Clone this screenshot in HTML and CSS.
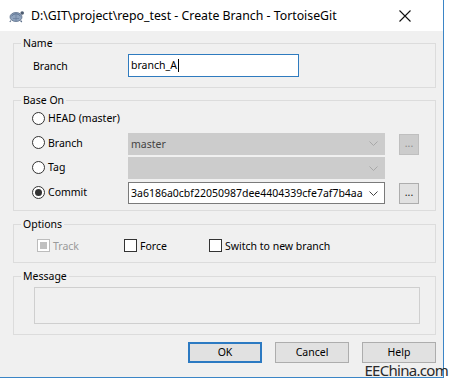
FILE: index.html
```html
<!DOCTYPE html>
<html>
<head>
<meta charset="utf-8">
<link rel="stylesheet" href="styles.css">
</head>
<body>
<div class="window">
  <div class="titlebar">
    <svg class="app-icon" width="16" height="14" viewBox="0 0 16 14">
      <ellipse cx="7" cy="8" rx="6" ry="4.5" fill="#8fa3bd"/>
      <path d="M2.5 7 Q7 2.5 11.5 7" fill="none" stroke="#5f7593" stroke-width="1"/>
      <path d="M4 9.5 L10 9.5 M7 5 L7 12" stroke="#6d829e" stroke-width="0.8"/>
      <ellipse cx="7" cy="8" rx="6" ry="4.5" fill="none" stroke="#5c6f8a" stroke-width="0.8"/>
      <circle cx="13.2" cy="4" r="1.8" fill="#4c5b70"/>
      <path d="M2 11.5 L0.8 13 M11.5 11.5 L12.8 13" stroke="#5c6f8a" stroke-width="1.2"/>
    </svg>
    <span class="title">D:\GIT\project\repo_test - Create Branch - TortoiseGit</span>
    <svg class="close" width="12" height="12" viewBox="0 0 12 12">
      <path d="M0.5 0.5 L11.5 11.5 M11.5 0.5 L0.5 11.5" stroke="#111" stroke-width="1.1"/>
    </svg>
  </div>
  <div class="content">
    <fieldset class="group group-name">
      <legend>Name</legend>
      <div class="name-row">
        <span class="field-label">Branch</span>
        <div class="textbox">branch_A<span class="caret"></span></div>
      </div>
    </fieldset>

    <fieldset class="group group-base">
      <legend>Base On</legend>
      <div class="base-grid">
        <div class="radio-item"><span class="radio"></span><span>HEAD (master)</span></div>
        <div></div>
        <div></div>

        <div class="radio-item"><span class="radio"></span><span>Branch</span></div>
        <div class="combo disabled"><span class="combo-text">master</span>
          <svg class="chev" width="9" height="5" viewBox="0 0 9 5"><path d="M0.5 0.5 L4.5 4.5 L8.5 0.5" fill="none" stroke="#a8a8a8"/></svg>
        </div>
        <div class="dots disabled">...</div>

        <div class="radio-item"><span class="radio"></span><span>Tag</span></div>
        <div class="combo disabled"><span class="combo-text"></span>
          <svg class="chev" width="9" height="5" viewBox="0 0 9 5"><path d="M0.5 0.5 L4.5 4.5 L8.5 0.5" fill="none" stroke="#a8a8a8"/></svg>
        </div>
        <div></div>

        <div class="radio-item"><span class="radio checked"></span><span>Commit</span></div>
        <div class="combo"><span class="combo-text">3a6186a0cbf22050987dee4404339cfe7af7b4aa</span>
          <svg class="chev" width="9" height="5" viewBox="0 0 9 5"><path d="M0.5 0.5 L4.5 4.5 L8.5 0.5" fill="none" stroke="#444"/></svg>
        </div>
        <div class="dots">...</div>
      </div>
    </fieldset>

    <fieldset class="group group-options">
      <legend>Options</legend>
      <div class="options-row">
        <div class="check-item track"><span class="checkbox disabled-checked"></span><span>Track</span></div>
        <div class="check-item force"><span class="checkbox"></span><span>Force</span></div>
        <div class="check-item"><span class="checkbox"></span><span>Switch to new branch</span></div>
      </div>
    </fieldset>

    <fieldset class="group group-message">
      <legend>Message</legend>
      <div class="message-box"></div>
    </fieldset>

    <div class="buttons">
      <div class="btn default">OK</div>
      <div class="btn">Cancel</div>
      <div class="btn">Help</div>
    </div>
  </div>
</div>
<div class="watermark">EEChina.com</div>
</body>
</html>
```

FILE: styles.css
```css
* { box-sizing: border-box; }
html, body { margin: 0; padding: 0; background: #ffffff; }
body {
  width: 452px;
  height: 380px;
  position: relative;
  overflow: hidden;
  font-family: "Noto Sans", "Open Sans", sans-serif;
  font-size: 10.5px;
  color: #000;
}
.window {
  width: 444px;
  height: 378px;
  background: #f0f0f0;
  border-right: 1px solid #3b85c6;
  border-bottom: 1px solid #3b85c6;
  display: flex;
  flex-direction: column;
}
.titlebar {
  height: 31px;
  flex: none;
  background: #fff;
  display: flex;
  align-items: center;
  padding-left: 9px;
}
.app-icon { flex: none; margin-right: 6px; margin-top: 1px; }
.title { flex: 1; font-size: 12.3px; white-space: nowrap; }
.close { flex: none; margin-right: 32px; }

.content {
  flex: 1;
  display: flex;
  flex-direction: column;
  padding: 5px 7px 0 13px;
}
.group {
  margin: 0;
  padding: 0;
  min-width: 0;
  border: 1px solid #dcdcdc;
}
.group legend {
  padding: 0 2px;
  margin-left: 7px;
  line-height: 14px;
  font-size: 10.5px;
}
.group-base { margin-top: 5px; }
.group-options { margin-top: 6px; }
.group-message { margin-top: 6px; }

.name-row {
  display: flex;
  align-items: center;
  padding: 4px 0 10px 19px;
}
.field-label { width: 95px; flex: none; }
.textbox {
  width: 171px;
  height: 23px;
  border: 1px solid #2f7bbf;
  background: #fff;
  padding-left: 2px;
  line-height: 21px;
  display: flex;
  align-items: center;
}
.caret {
  display: inline-block;
  width: 1px;
  height: 13px;
  background: #000;
  margin-left: 1px;
}

.base-grid {
  display: grid;
  grid-template-columns: 82px 257px 20px;
  grid-template-rows: 22px 22px 22px 22px;
  column-gap: 14px;
  row-gap: 2.7px;
  padding: 1px 0 6px 18px;
}
.radio-item {
  display: flex;
  align-items: center;
  gap: 3px;
  margin-top: -2px;
  white-space: nowrap;
}
.radio {
  width: 13px;
  height: 13px;
  flex: none;
  border: 1px solid #333;
  border-radius: 50%;
  background: #fff;
  display: flex;
  align-items: center;
  justify-content: center;
}
.radio.checked::after {
  content: "";
  width: 7px;
  height: 7px;
  border-radius: 50%;
  background: #333;
}
.combo {
  display: flex;
  align-items: center;
  border: 1px solid #7a7a7a;
  background: #fff;
  padding-left: 2px;
  padding-right: 6px;
}
.combo.disabled {
  background: #cccccc;
  border-color: #cccccc;
  color: #444;
}
.combo-text { flex: 1; white-space: nowrap; overflow: hidden; }
.chev { flex: none; }
.dots {
  height: 21px;
  align-self: end;
  border: 1px solid #adadad;
  background: #e1e1e1;
  text-align: center;
  line-height: 17px;
  color: #222;
}
.dots.disabled {
  align-self: start;
  margin-top: 1px;
  background: #cccccc;
  border-color: #bfbfbf;
  color: #8a8a8a;
}

.options-row {
  display: flex;
  align-items: center;
  height: 15px;
  margin: 7px 0 9px 23px;
}
.check-item { display: flex; align-items: center; gap: 3px; }
.check-item.track { width: 87px; color: #9a9a9a; }
.check-item.force { width: 85px; }
.checkbox {
  width: 13px;
  height: 13px;
  flex: none;
  border: 1px solid #333;
  background: #fff;
  display: flex;
  align-items: center;
  justify-content: center;
}
.checkbox.disabled-checked { border-color: #bcbcbc; }
.checkbox.disabled-checked::after {
  content: "";
  width: 7px;
  height: 7px;
  background: #c0c0c0;
}

.message-box {
  margin: 4px 0 10px 20px;
  width: 386px;
  height: 37px;
  border: 1px solid #cfcfcf;
  background: #f0f0f0;
}

.buttons {
  display: flex;
  justify-content: flex-end;
  gap: 13px;
  margin-top: 7px;
}
.btn {
  width: 74px;
  height: 21px;
  border: 1px solid #adadad;
  background: #e1e1e1;
  text-align: center;
  line-height: 19px;
}
.btn.default {
  border: 2px solid #2c7ac2;
  line-height: 17px;
}

.watermark {
  position: absolute;
  right: 4px;
  bottom: 1px;
  font-family: "Noto Sans", sans-serif;
  font-size: 15px;
  letter-spacing: -0.7px;
  color: #2a2a2a;
  line-height: 17px;
}
```
